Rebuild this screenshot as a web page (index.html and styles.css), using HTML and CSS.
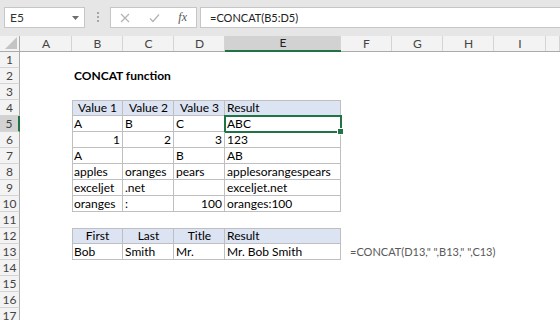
FILE: index.html
```html
<!DOCTYPE html>
<html lang="en">
<head>
    <meta charset="UTF-8">
    <meta name="viewport" content="width=device-width, initial-scale=1.0">
    <title>CONCAT function</title>
    <link rel="stylesheet" href="styles.css">
</head>
<body>
    <div class="toolbar">
        <div class="namebox">
            <span>E5</span>
            <svg class="drop" width="7" height="4" viewBox="0 0 7 4"><path d="M0 0h7L3.5 4z" fill="#6d6d6d"/></svg>
        </div>
        <div class="grip"></div>
        <div class="fxbtns">
            <svg width="10" height="10" viewBox="0 0 10 10"><path d="M1 1l8 8M9 1L1 9" stroke="#b3b3b3" stroke-width="1.2" fill="none"/></svg>
            <svg width="11" height="10" viewBox="0 0 11 10"><path d="M1 5.5l3 3L10 1.5" stroke="#b3b3b3" stroke-width="1.2" fill="none"/></svg>
            <span class="fx">fx</span>
        </div>
        <div class="formula">=CONCAT(B5:D5)</div>
    </div>

    <div id="sheet" class="sheet"></div>

    <script>
        const sheet = document.getElementById('sheet');
        const cols = ['A', 'B', 'C', 'D', 'E', 'F', 'G', 'H', 'I', ''];
        const rowCount = 17;

        const cells = {
            B2: ['CONCAT function', 'title'],
            B4: ['Value 1', 'th mid'], C4: ['Value 2', 'th mid'], D4: ['Value 3', 'th mid'], E4: ['Result', 'th'],
            B5: ['A'], C5: ['B'], D5: ['C'], E5: ['ABC', 'sel'],
            B6: ['1', 'num'], C6: ['2', 'num'], D6: ['3', 'num'], E6: ['123'],
            B7: ['A'], D7: ['B'], E7: ['AB'],
            B8: ['apples'], C8: ['oranges'], D8: ['pears'], E8: ['applesorangespears'],
            B9: ['exceljet'], C9: ['.net'], E9: ['exceljet.net'],
            B10: ['oranges'], C10: [':'], D10: ['100', 'num'], E10: ['oranges:100'],
            B12: ['First', 'th mid'], C12: ['Last', 'th mid'], D12: ['Title', 'th mid'], E12: ['Result', 'th'],
            B13: ['Bob'], C13: ['Smith'], D13: ['Mr.'], E13: ['Mr. Bob Smith'],
            F13: ['=CONCAT(D13," ",B13," ",C13)', 'note']
        };

        // table blocks: first row, last row (columns B..E)
        const tables = [[4, 10], [12, 13]];

        function inTable(col, row) {
            if (col < 1 || col > 4) return null;
            return tables.find(t => row >= t[0] && row <= t[1]);
        }

        let html = '<div class="corner"><svg width="12" height="12" viewBox="0 0 12 12"><path d="M12 0v12H0z" fill="#c4c4c4"/></svg></div>';
        cols.forEach(c => {
            html += `<div class="ch${c === 'E' ? ' on' : ''}">${c}</div>`;
        });

        for (let r = 1; r <= rowCount; r++) {
            html += `<div class="rh${r === 5 ? ' on' : ''}">${r}</div>`;
            cols.forEach((c, i) => {
                const cell = cells[c + r] || [''];
                const cls = ['cell'];
                if (cell[1]) cls.push(cell[1]);
                const t = inTable(i, r);
                if (t) {
                    cls.push('t');
                    if (i === 1) cls.push('tl');
                    if (r === t[0]) cls.push('tt');
                }
                html += `<div class="${cls.join(' ')}">${cell[0]}</div>`;
            });
        }
        sheet.innerHTML = html;
    </script>
</body>
</html>
```

FILE: styles.css
```css
body {
    margin: 0;
    width: 560px;
    height: 320px;
    overflow: hidden;
    background: #fff;
    font-family: Lato, "Liberation Sans", sans-serif;
    font-size: 12px;
    color: #000;
}

.toolbar {
    display: flex;
    align-items: flex-start;
    height: 36px;
    padding: 7px 0 0 4px;
    box-sizing: border-box;
    background: #e6e6e6;
}

.namebox, .fxbtns, .formula {
    height: 21px;
    box-sizing: border-box;
    background: #fff;
    border: 1px solid #c6c6c6;
    display: flex;
    align-items: center;
}

.namebox {
    width: 81px;
    justify-content: space-between;
    padding: 0 5px 0 5px;
    color: #333;
}

.grip {
    width: 0;
    height: 10px;
    margin: 5px 0 0 12px;
    border-left: 2px dotted #a6a6a6;
}

.fxbtns {
    width: 87px;
    margin-left: 11px;
    padding: 0 9px 0 9px;
    justify-content: space-between;
}

.fx {
    font-family: "Liberation Serif", serif;
    font-style: italic;
    font-size: 12px;
    color: #555;
}

.formula {
    flex: 1;
    margin-left: 3px;
    padding-left: 9px;
    font-size: 11px;
    color: #222;
    border-right: none;
}

.sheet {
    display: grid;
    grid-template-columns: 20px 52px 51px 51px 51px 116px 51px 51px 51px 52px 1fr;
    grid-auto-rows: 16px;
}

.corner {
    background: #f3f3f3;
    border-right: 1px solid #ababab;
    border-bottom: 1px solid #ababab;
    display: flex;
    align-items: flex-end;
    justify-content: flex-end;
    padding: 0 2px 2px 0;
}

.ch {
    background: #f3f3f3;
    border-bottom: 1px solid #ababab;
    box-shadow: inset -1px 0 0 #d4d4d4;
    text-align: center;
    line-height: 15px;
    color: #444;
}

.ch.on {
    background: #d2d2d2;
    border-bottom: 2px solid #217346;
    line-height: 14px;
    color: #222;
}

.rh {
    background: #f3f3f3;
    border-right: 1px solid #ababab;
    border-bottom: 1px solid #d4d4d4;
    text-align: center;
    line-height: 15px;
    color: #444;
}

.rh.on {
    background: #d2d2d2;
    border-right: 2px solid #217346;
}

.cell {
    position: relative;
    padding: 0 2px;
    line-height: 16px;
    white-space: nowrap;
}

.t {
    box-shadow: inset -1px -1px 0 #bfbfbf;
}

.t.tl {
    box-shadow: inset -1px -1px 0 #bfbfbf, inset 1px 0 0 #bfbfbf;
}

.t.tt {
    box-shadow: inset -1px -1px 0 #bfbfbf, inset 0 1px 0 #bfbfbf;
}

.t.tl.tt {
    box-shadow: inset -1px -1px 0 #bfbfbf, inset 1px 1px 0 #bfbfbf;
}

.th {
    background: #dce3f2;
}

.mid {
    text-align: center;
}

.num {
    text-align: right;
    padding-right: 3px;
}

.title {
    font-weight: bold;
}

.note {
    padding-left: 9px;
    font-size: 11px;
    color: #595959;
}

.sel::after {
    content: "";
    position: absolute;
    left: -1px;
    top: -1px;
    right: -1px;
    bottom: -1px;
    border: 2px solid #217346;
}

.sel::before {
    content: "";
    position: absolute;
    right: -3px;
    bottom: -3px;
    width: 5px;
    height: 5px;
    background: #217346;
    border: 1px solid #fff;
    z-index: 1;
}
```
